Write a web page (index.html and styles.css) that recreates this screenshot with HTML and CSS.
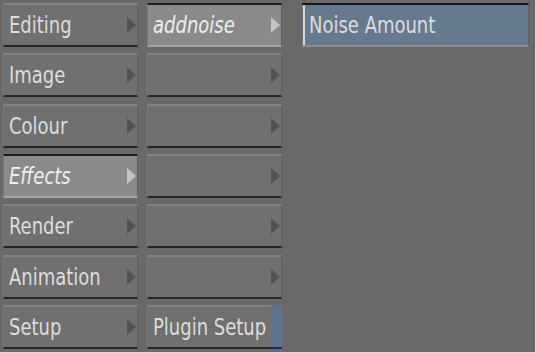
FILE: index.html
```html
<!DOCTYPE html>
<html>
<head>
<meta charset="utf-8">
<link rel="stylesheet" href="styles.css">
</head>
<body>
<div class="frame">
  <div class="col">
    <div class="btn"><span class="lbl">Editing</span><span class="arr"></span></div>
    <div class="btn"><span class="lbl">Image</span><span class="arr"></span></div>
    <div class="btn"><span class="lbl">Colour</span><span class="arr"></span></div>
    <div class="btn sel"><span class="lbl">Effects</span><span class="arr"></span></div>
    <div class="btn"><span class="lbl">Render</span><span class="arr"></span></div>
    <div class="btn"><span class="lbl">Animation</span><span class="arr"></span></div>
    <div class="btn"><span class="lbl">Setup</span><span class="arr"></span></div>
  </div>
  <div class="col">
    <div class="btn sel"><span class="lbl">addnoise</span><span class="arr"></span></div>
    <div class="btn"><span class="lbl"></span><span class="arr"></span></div>
    <div class="btn"><span class="lbl"></span><span class="arr"></span></div>
    <div class="btn"><span class="lbl"></span><span class="arr"></span></div>
    <div class="btn"><span class="lbl"></span><span class="arr"></span></div>
    <div class="btn"><span class="lbl"></span><span class="arr"></span></div>
    <div class="btn plug"><span class="lbl">Plugin Setup</span><span class="bar"></span></div>
  </div>
  <div class="col3">
    <div class="field"><span class="cursor"></span><span class="flbl">Noise Amount</span></div>
  </div>
</div>
</body>
</html>
```
FILE: styles.css
```css
html { background: #dadada; }
body {
  margin: 0;
  font-family: "DejaVu Sans Condensed", "DejaVu Sans", sans-serif;
}
.frame {
  width: 535px;
  height: 352px;
  box-sizing: border-box;
  background: #696969;
  padding: 3px 0 0 3px;
  display: flex;
  align-items: flex-start;
}
.col {
  width: 135px;
  display: flex;
  flex-direction: column;
  gap: 6.33px;
  margin-right: 9px;
}
.col + .col { margin-right: 20px; }
.btn {
  height: 44px;
  box-sizing: border-box;
  background: #707070;
  border-top: 2px solid #848484;
  border-bottom: 2px solid #262626;
  border-left: 1px solid #7a7a7a;
  border-right: 1px solid #5e5e5e;
  display: flex;
  align-items: center;
  padding-left: 5px;
  color: #dcdcdc;
  font-size: 20px;
}
.btn.sel {
  background: #8a8a8a;
  border-top: 2px solid #1e1e1e;
  border-bottom: 2px solid #a2a2a2;
  font-style: italic;
  color: #eeeeee;
}
.lbl {
  flex: 1;
  white-space: nowrap;
  transform: scaleY(1.12);
  transform-origin: left center;
}
.arr {
  width: 0; height: 0;
  border-top: 8px solid transparent;
  border-bottom: 8px solid transparent;
  border-left: 9px solid #525252;
  margin-right: 1px;
}
.sel .arr { border-left-color: #c4c4c4; }
.plug { padding-right: 0; border-right: 0; }
.bar {
  align-self: stretch;
  width: 11px;
  margin-top: -2px;
  margin-bottom: -2px;
  background: #5e7390;
  border-bottom: 2px solid #1c2a78;
}
.col3 { width: 227px; }
.field {
  height: 44px;
  box-sizing: border-box;
  background: #657a8c;
  border-top: 2px solid #151515;
  border-bottom: 2px solid #8e8e8e;
  border-right: 1px solid #55606a;
  display: flex;
  align-items: center;
  color: #dcdcdc;
  font-size: 20px;
}
.cursor {
  align-self: stretch;
  width: 2px;
  margin-left: 1px;
  background: #d6d6d6;
}
.flbl {
  margin-left: 4px;
  transform: scaleY(1.12);
  transform-origin: left center;
}
```
